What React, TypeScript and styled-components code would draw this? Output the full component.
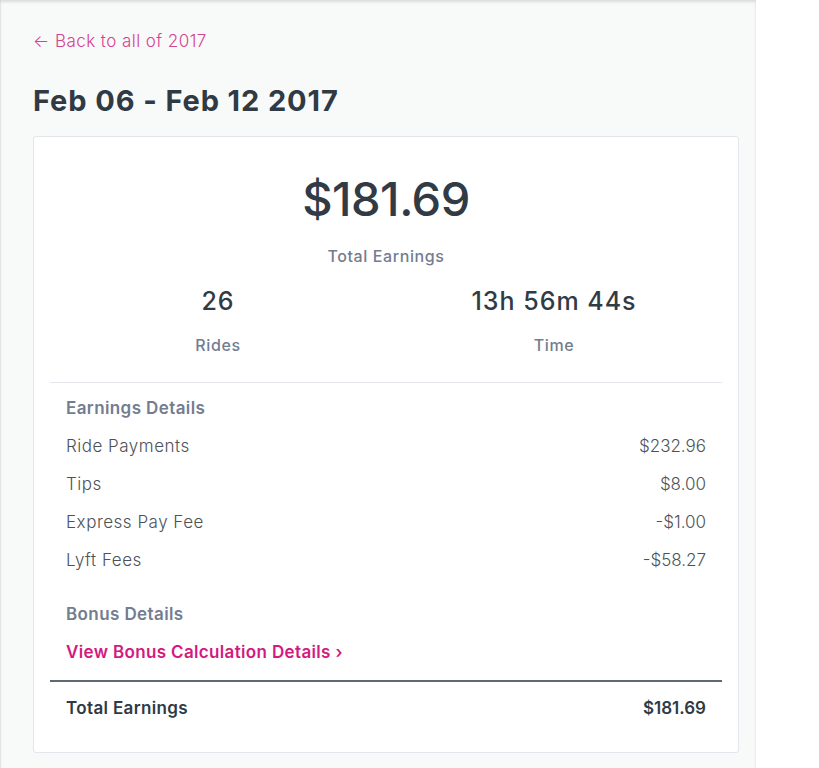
import React from "react";
import styled, { createGlobalStyle } from "styled-components";

const Global = createGlobalStyle`
  html, body { margin: 0; padding: 0; background: #ffffff; }
  body { font-family: "Inter", "Open Sans", sans-serif; -webkit-font-smoothing: antialiased; }
  * { box-sizing: border-box; }
`;

const Page = styled.div`
  width: 756px;
  min-height: 768px;
  background: #f8f9f9;
  box-shadow: inset 0 2px 3px rgba(0, 0, 0, 0.12), inset 1px 0 0 #eef0f0;
  padding: 31px 17px 0 33px;
  display: flex;
  flex-direction: column;
`;

const BackLink = styled.a`
  font-size: 17px;
  line-height: 20px;
  font-weight: 300;
  letter-spacing: 0.45px;
  color: #d4438f;
  text-decoration: none;
  align-self: flex-start;
`;

const Title = styled.h1`
  margin: 32px 0 17px;
  font-size: 29px;
  line-height: 36px;
  font-weight: 700;
  color: #2f3a44;
  letter-spacing: 0.9px;
`;

const Card = styled.div`
  background: #ffffff;
  border: 1px solid #e3e6ea;
  border-radius: 3px;
  padding: 34px 16px 25px;
  display: flex;
  flex-direction: column;
`;

const Hero = styled.div`
  display: flex;
  flex-direction: column;
  align-items: center;
  padding-bottom: 27px;
  border-bottom: 1px solid #e3e6ea;
`;

const Amount = styled.div`
  font-size: 47px;
  line-height: 56px;
  font-weight: 500;
  color: #313b45;
  letter-spacing: -0.5px;
`;

const Caption = styled.div<{ $gap?: number }>`
  margin-top: ${(p) => p.$gap ?? 19}px;
  font-size: 16px;
  line-height: 20px;
  font-weight: 500;
  letter-spacing: 0.6px;
  color: #737c90;
`;

const Stats = styled.div`
  margin-top: 20px;
  width: 100%;
  display: grid;
  grid-template-columns: 1fr 1fr;
`;

const Stat = styled.div`
  display: flex;
  flex-direction: column;
  align-items: center;
`;

const StatValue = styled.div`
  font-size: 25px;
  line-height: 30px;
  font-weight: 500;
  color: #313b45;
  letter-spacing: 1px;
`;

const Details = styled.div`
  padding-top: 6px;
  display: flex;
  flex-direction: column;
`;

const Row = styled.div<{ $strong?: boolean; $space?: number }>`
  display: flex;
  justify-content: space-between;
  align-items: center;
  height: 38px;
  padding: 0 16px;
  margin-top: ${(p) => p.$space ?? 0}px;
  font-size: 17px;
  font-weight: ${(p) => (p.$strong ? 600 : 300)};
  letter-spacing: ${(p) => (p.$strong ? 0.35 : 0.5)}px;
  color: ${(p) => (p.$strong ? "#2f3a44" : "#4d5257")};
`;

const Value = styled.span`
  letter-spacing: 0;
`;

const SectionTitle = styled.div<{ $space?: number }>`
  height: 38px;
  display: flex;
  align-items: center;
  padding: 0 16px;
  margin-top: ${(p) => p.$space ?? 0}px;
  font-size: 17px;
  font-weight: 600;
  letter-spacing: 0.4px;
  color: #737c90;
`;

const BonusLink = styled.a`
  height: 38px;
  display: flex;
  align-items: center;
  padding: 0 16px;
  font-size: 17px;
  font-weight: 600;
  letter-spacing: 0.35px;
  color: #d21a80;
  text-decoration: none;
`;

const TotalDivider = styled.div`
  margin-top: 9px;
  height: 2px;
  background: #5d6978;
`;

const TotalRow = styled(Row)`
  margin-top: 7px;
`;

const items = [
  ["Ride Payments", "$232.96"],
  ["Tips", "$8.00"],
  ["Express Pay Fee", "-$1.00"],
  ["Lyft Fees", "-$58.27"],
];

export default function App() {
  return (
    <>
      <Global />
      <Page>
        <BackLink href="#">← Back to all of 2017</BackLink>
        <Title>Feb 06 - Feb 12 2017</Title>
        <Card>
          <Hero>
            <Amount>$181.69</Amount>
            <Caption>Total Earnings</Caption>
            <Stats>
              <Stat>
                <StatValue>26</StatValue>
                <Caption>Rides</Caption>
              </Stat>
              <Stat>
                <StatValue>13h 56m 44s</StatValue>
                <Caption>Time</Caption>
              </Stat>
            </Stats>
          </Hero>
          <Details>
            <SectionTitle>Earnings Details</SectionTitle>
            {items.map(([label, value]) => (
              <Row key={label}>
                <span>{label}</span>
                <Value>{value}</Value>
              </Row>
            ))}
            <SectionTitle $space={16}>Bonus Details</SectionTitle>
            <BonusLink href="#">View Bonus Calculation Details ›</BonusLink>
          </Details>
          <TotalDivider />
          <TotalRow $strong>
            <span>Total Earnings</span>
            <Value>$181.69</Value>
          </TotalRow>
        </Card>
      </Page>
    </>
  );
}
